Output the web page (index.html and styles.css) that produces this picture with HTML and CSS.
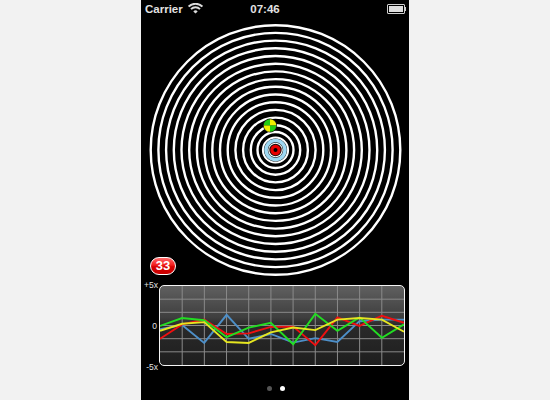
FILE: index.html
```html
<!DOCTYPE html>
<html>
<head>
<meta charset="utf-8">
<link rel="stylesheet" href="styles.css">
</head>
<body>
<div class="phone">
  <div class="status">
    <div class="carrier">
      <span>Carrier</span>
      <svg class="wifi" width="15" height="11" viewBox="0 0 15 11">
        <path d="M0.6 3.6 A9.8 9.8 0 0 1 14.4 3.6" fill="none" stroke="#dcdcdc" stroke-width="1.9"/>
        <path d="M3 6.1 A6.3 6.3 0 0 1 12 6.1" fill="none" stroke="#dcdcdc" stroke-width="1.9"/>
        <path d="M7.5 10.6 L5.3 8.4 A3.1 3.1 0 0 1 9.7 8.4 Z" fill="#dcdcdc"/>
      </svg>
    </div>
    <div class="time">07:46</div>
    <div class="battery"><div class="batt-body"><div class="batt-fill"></div></div><div class="batt-tip"></div></div>
  </div>

  <div class="stage">
    <svg class="rings" width="268" height="265" viewBox="0 0 268 265">
      <g fill="none" stroke="#fff" stroke-width="2.4">
        <circle cx="134.5" cy="133" r="124.8"/>
        <circle cx="134.5" cy="133" r="117.1"/>
        <circle cx="134.5" cy="133" r="109.4"/>
        <circle cx="134.5" cy="133" r="101.7"/>
        <circle cx="134.5" cy="133" r="94"/>
        <circle cx="134.5" cy="133" r="86.3"/>
        <circle cx="134.5" cy="133" r="78.6"/>
        <circle cx="134.5" cy="133" r="70.9"/>
        <circle cx="134.5" cy="133" r="63.2"/>
        <circle cx="134.5" cy="133" r="55.5"/>
        <circle cx="134.5" cy="133" r="47.8"/>
        <circle cx="134.5" cy="133" r="40.1"/>
        <circle cx="134.5" cy="133" r="32.4"/>
        <circle cx="134.5" cy="133" r="24.7"/>
        <circle cx="134.5" cy="133" r="18"/>
        <circle cx="134.5" cy="133" r="12.6" stroke-width="2"/>
      </g>
      <circle cx="134.5" cy="133" r="9.5" fill="none" stroke="#9ed8f2" stroke-width="3.6"/>
      <circle cx="134.5" cy="133" r="7.3" fill="#fff"/>
      <circle cx="134.5" cy="133" r="6.2" fill="#111"/>
      <circle cx="134.5" cy="133" r="5.2" fill="#e60000"/>
      <circle cx="134.5" cy="133" r="2" fill="#000"/>
      <g transform="translate(129 108.5)">
        <circle r="7" fill="#1a1a1a"/>
        <path d="M0 0 L-6.3 0 A6.3 6.3 0 0 1 0 -6.3 Z" fill="#22cc11"/>
        <path d="M0 0 L0 -6.3 A6.3 6.3 0 0 1 6.3 0 Z" fill="#eef000"/>
        <path d="M0 0 L6.3 0 A6.3 6.3 0 0 1 0 6.3 Z" fill="#22cc11"/>
        <path d="M0 0 L0 6.3 A6.3 6.3 0 0 1 -6.3 0 Z" fill="#eef000"/>
      </g>
    </svg>
    <div class="badge">33</div>
  </div>

  <div class="chart-row">
    <div class="labels">
      <span>+5x</span>
      <span>0</span>
      <span>-5x</span>
    </div>
    <div class="chart">
      <svg class="plot" viewBox="57 105 740 247" preserveAspectRatio="none">
        <g stroke="#8a8a8a" stroke-width="1">
          <line x1="124.3" y1="105" x2="124.3" y2="352" vector-effect="non-scaling-stroke"/>
          <line x1="191.5" y1="105" x2="191.5" y2="352" vector-effect="non-scaling-stroke"/>
          <line x1="258.8" y1="105" x2="258.8" y2="352" vector-effect="non-scaling-stroke"/>
          <line x1="326.1" y1="105" x2="326.1" y2="352" vector-effect="non-scaling-stroke"/>
          <line x1="393.4" y1="105" x2="393.4" y2="352" vector-effect="non-scaling-stroke"/>
          <line x1="460.6" y1="105" x2="460.6" y2="352" vector-effect="non-scaling-stroke"/>
          <line x1="527.9" y1="105" x2="527.9" y2="352" vector-effect="non-scaling-stroke"/>
          <line x1="595.2" y1="105" x2="595.2" y2="352" vector-effect="non-scaling-stroke"/>
          <line x1="662.4" y1="105" x2="662.4" y2="352" vector-effect="non-scaling-stroke"/>
          <line x1="729.7" y1="105" x2="729.7" y2="352" vector-effect="non-scaling-stroke"/>
          <line x1="57" y1="146.2" x2="797" y2="146.2" vector-effect="non-scaling-stroke"/>
          <line x1="57" y1="187.3" x2="797" y2="187.3" vector-effect="non-scaling-stroke"/>
          <line x1="57" y1="228.5" x2="797" y2="228.5" vector-effect="non-scaling-stroke"/>
          <line x1="57" y1="269.7" x2="797" y2="269.7" vector-effect="non-scaling-stroke"/>
          <line x1="57" y1="310.8" x2="797" y2="310.8" vector-effect="non-scaling-stroke"/>
        </g>
        <g fill="none" stroke-width="1.9" stroke-linejoin="miter">
          <polyline vector-effect="non-scaling-stroke" stroke="#4d8fc8" points="57,240 124,227 191,283 259,195 326,270 393,255 461,282 528,268 595,280 662,215 730,210 797,210"/>
          <polyline vector-effect="non-scaling-stroke" stroke="#ee1010" points="57,270 124,225 191,210 259,255 326,253 393,233 461,232 528,290 595,203 662,230 730,198 797,220"/>
          <polyline vector-effect="non-scaling-stroke" stroke="#22dd22" points="57,230 124,205 191,212 259,265 326,235 393,220 461,287 528,192 595,245 662,203 730,267 797,225"/>
          <polyline vector-effect="non-scaling-stroke" stroke="#e6e620" points="57,245 124,223 191,218 259,280 326,283 393,250 461,235 528,243 595,210 662,205 730,210 797,248"/>
        </g>
      </svg>
    </div>
  </div>

  <div class="pager">
    <span class="dot"></span>
    <span class="dot active"></span>
  </div>
</div>
</body>
</html>
```

FILE: styles.css
```css
html, body {
  margin: 0;
  padding: 0;
}
body {
  background: #f2f2f2;
  font-family: "Liberation Sans", Arial, sans-serif;
}
.phone {
  width: 268px;
  height: 400px;
  margin: 0 auto;
  background: #000;
  overflow: hidden;
}
.status {
  height: 17px;
  display: flex;
  align-items: center;
  justify-content: space-between;
  padding: 0 3px 0 4px;
  color: #e2e2e2;
  font-size: 11.5px;
  font-weight: bold;
}
.carrier {
  display: flex;
  align-items: center;
  gap: 5px;
  width: 80px;
}
.wifi {
  display: block;
  margin-top: -1px;
}
.time {
  flex: 1;
  text-align: center;
  margin-left: -21px;
}
.battery {
  width: 80px;
  display: flex;
  justify-content: flex-end;
  align-items: center;
}
.batt-body {
  width: 14px;
  height: 6px;
  border: 1px solid #cfcfcf;
  border-radius: 1px;
  padding: 1px;
}
.batt-fill {
  width: 100%;
  height: 100%;
  background: #dedede;
}
.batt-tip {
  width: 1.5px;
  height: 4px;
  background: #cfcfcf;
}
.stage {
  height: 265px;
  position: relative;
}
.rings {
  display: block;
}
.badge {
  position: absolute;
  left: 9px;
  top: 240px;
  width: 24px;
  height: 16px;
  border: 1.5px solid #fff;
  border-radius: 10px;
  background: linear-gradient(#ff6a6a 0%, #f21c1c 45%, #d40000 55%, #c80000 100%);
  color: #fff;
  font-weight: bold;
  font-size: 13px;
  line-height: 16px;
  text-align: center;
  box-shadow: 0 1px 1px rgba(0,0,0,0.6);
}
.chart-row {
  display: flex;
  margin-top: 3px;
}
.labels {
  width: 16px;
  padding-right: 2px;
  height: 90px;
  margin-top: -4px;
  display: flex;
  flex-direction: column;
  justify-content: space-between;
  align-items: flex-end;
  color: #e0e0e0;
  font-size: 8.5px;
  line-height: 8px;
}
.labels span:first-child,
.labels span:last-child {
  margin-right: -1px;
}
.chart {
  width: 244px;
  height: 79px;
  border: 1.5px solid #f4f4f4;
  border-radius: 5px;
  overflow: hidden;
  background: linear-gradient(#606060 0%, #3e3e3e 40%, #2a2a2a 50%, #1e1e1e 100%);
}
.plot {
  display: block;
  width: 100%;
  height: 100%;
}
.pager {
  display: flex;
  justify-content: center;
  gap: 8px;
  margin-top: 15px;
  padding-left: 1px;
}
.dot {
  width: 5px;
  height: 5px;
  border-radius: 50%;
  background: #555;
}
.dot.active {
  background: #fff;
}
```
